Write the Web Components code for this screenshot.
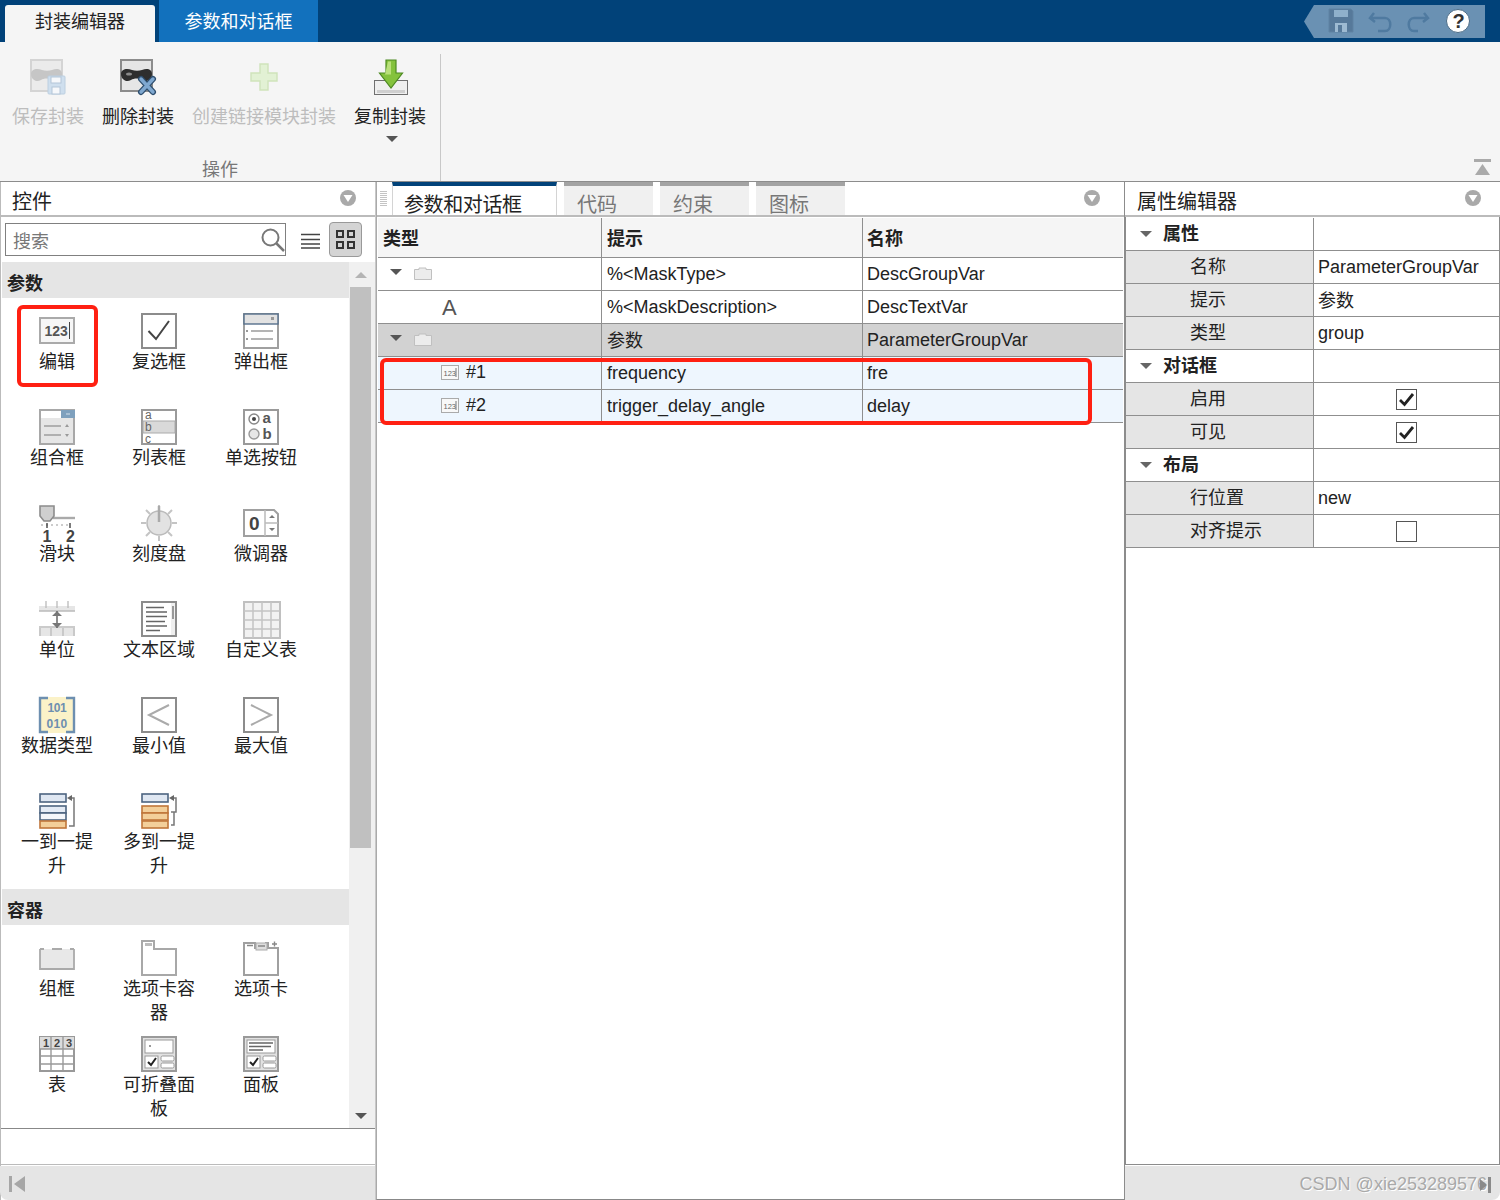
<!DOCTYPE html>
<html lang="zh">
<head>
<meta charset="utf-8">
<title>封装编辑器</title>
<style>
  html,body{margin:0;padding:0;background:#fff;}
  body{font-family:"Liberation Sans","Noto Sans CJK SC",sans-serif;color:#222;font-size:18px;}
</style>
</head>
<body>
<me-app>
  <me-ribbon slot="ribbon">
    <me-ribbon-button icon="saveMask" disabled>保存封装</me-ribbon-button>
    <me-ribbon-button icon="delMask">删除封装</me-ribbon-button>
    <me-ribbon-button icon="plus" disabled>创建链接模块封装</me-ribbon-button>
    <me-ribbon-button icon="copyMask" caret>复制封装</me-ribbon-button>
  </me-ribbon>

  <me-pane slot="left" status="left">
    <me-pane-title slot="head" label="控件"></me-pane-title>
    <me-palette-tools></me-palette-tools>
    <me-palette>
      <me-section label="参数">
        <me-item icon="edit">编辑</me-item>
        <me-item icon="check">复选框</me-item>
        <me-item icon="popup">弹出框</me-item>
        <me-item icon="combo">组合框</me-item>
        <me-item icon="list">列表框</me-item>
        <me-item icon="radio">单选按钮</me-item>
        <me-item icon="slider">滑块</me-item>
        <me-item icon="dial">刻度盘</me-item>
        <me-item icon="spinner">微调器</me-item>
        <me-item icon="unit">单位</me-item>
        <me-item icon="textarea">文本区域</me-item>
        <me-item icon="custom">自定义表</me-item>
        <me-item icon="datatype">数据类型</me-item>
        <me-item icon="min">最小值</me-item>
        <me-item icon="max">最大值</me-item>
        <me-item icon="one">一到一提升</me-item>
        <me-item icon="many">多到一提升</me-item>
      </me-section>
      <me-section label="容器">
        <me-item icon="group">组框</me-item>
        <me-item icon="tabbox">选项卡容器</me-item>
        <me-item icon="tab">选项卡</me-item>
        <me-item icon="table">表</me-item>
        <me-item icon="collapse">可折叠面板</me-item>
        <me-item icon="panel">面板</me-item>
      </me-section>
    </me-palette>
  </me-pane>

  <me-pane slot="mid">
    <me-tabs slot="head"></me-tabs>
    <me-param-row kind="head"><span slot="a">类型</span><span slot="b">提示</span><span slot="c">名称</span></me-param-row>
    <me-param-row><me-tree-cell slot="a" icon="folder" caret></me-tree-cell><span slot="b">%&lt;MaskType&gt;</span><span slot="c">DescGroupVar</span></me-param-row>
    <me-param-row><me-tree-cell slot="a" icon="letter"></me-tree-cell><span slot="b">%&lt;MaskDescription&gt;</span><span slot="c">DescTextVar</span></me-param-row>
    <me-param-row kind="sel"><me-tree-cell slot="a" icon="folder" caret></me-tree-cell><span slot="b" style="margin-bottom:2px">参数</span><span slot="c">ParameterGroupVar</span></me-param-row>
    <me-param-row kind="child"><me-tree-cell slot="a" icon="mini">#1</me-tree-cell><span slot="b">frequency</span><span slot="c">fre</span></me-param-row>
    <me-param-row kind="child"><me-tree-cell slot="a" icon="mini">#2</me-tree-cell><span slot="b">trigger_delay_angle</span><span slot="c">delay</span></me-param-row>
  </me-pane>

  <me-pane slot="right" status="right">
    <me-pane-title slot="head" label="属性编辑器" style="padding-left:12px"></me-pane-title>
    <me-prop-table>
      <me-prop-row kind="head">属性</me-prop-row>
      <me-prop-row label="名称">ParameterGroupVar</me-prop-row>
      <me-prop-row label="提示" cjk>参数</me-prop-row>
      <me-prop-row label="类型">group</me-prop-row>
      <me-prop-row kind="head">对话框</me-prop-row>
      <me-prop-row label="启用"><me-checkbox checked></me-checkbox></me-prop-row>
      <me-prop-row label="可见"><me-checkbox checked></me-checkbox></me-prop-row>
      <me-prop-row kind="head">布局</me-prop-row>
      <me-prop-row label="行位置">new</me-prop-row>
      <me-prop-row label="对齐提示"><me-checkbox></me-checkbox></me-prop-row>
    </me-prop-table>
  </me-pane>

  <me-highlight slot="over" style="left:17px;top:305px;width:81px;height:82px"></me-highlight>
  <me-highlight slot="over" style="left:380px;top:358px;width:712px;height:67px"></me-highlight>
</me-app>

<script>
const FONT = `"Liberation Sans","Noto Sans CJK SC",sans-serif`;

const MASK = "M1 13C1 8 7 7 12 9C15 10 19 10 22 9C27 7 32 8 32 13C32 18 27 22 22 19C19 17 14 17 11 19C6 22 1 18 1 13Z";

/* all icons are drawn on a 36x36 box */
const ICONS = {
  saveMask: `<rect x="1" y="1" width="31" height="31" fill="#ebebeb" stroke="#d4d4d4" stroke-width="2"/>
    <path d="${MASK}" transform="translate(0 2)" fill="#c6c6c6"/>
    <rect x="18" y="17" width="17" height="18" rx="1" fill="#cfdfee" stroke="#bccfe0"/>
    <rect x="21" y="18" width="10" height="6" fill="#f6f8fb" stroke="#b4c6d8"/>
    <rect x="22" y="28" width="8" height="7" fill="#f6f8fb" stroke="#b4c6d8"/>`,
  delMask: `<rect x="1" y="1" width="31" height="31" fill="#e6e6e6" stroke="#8c8c8c" stroke-width="2"/>
    <path d="${MASK}" transform="translate(0 2)" fill="#2e2e2e"/>
    <ellipse cx="9" cy="15" rx="3" ry="1.6" fill="#8a8a8a"/>
    <path d="M21 20L33 33M33 20L21 33" stroke="#2f4f6f" stroke-width="6" stroke-linecap="round"/>
    <path d="M21 20L33 33M33 20L21 33" stroke="#7fa8d0" stroke-width="3.4" stroke-linecap="round"/>`,
  plus: `<path d="M14 5h8v9h9v8h-9v9h-8v-9h-9v-8h9z" fill="#e2f1d4" stroke="#cfe3bb" stroke-width="1.4"/>`,
  copyMask: `<rect x="2.500" y="21.500" width="33" height="14" fill="#efefef" stroke="#707070"/>
    <rect x="5" y="31" width="28" height="3" fill="#cfcfcf"/>
    <path d="M14 1h10v13h6.500L19 29 7.500 14H14z" fill="#84c23c" stroke="#4d8a22" stroke-width="1.200"/>
    <path d="M16 2.500h3v13h-6z" fill="#b9e07a"/>`,
  edit: `<rect x="1" y="5" width="34" height="25" fill="#f6f6f6" stroke="#aaa" stroke-width="2"/>
    <text x="5.500" y="23" font-size="14" font-weight="700" fill="#555" font-family="Liberation Sans">123</text>
    <path d="M30.500 9v17" stroke="#444"/>`,
  check: `<rect x="1" y="1" width="34" height="34" fill="#fff" stroke="#8c8c8c" stroke-width="2"/>
    <path d="M7.500 18L15 26L28 8" fill="none" stroke="#444" stroke-width="2"/>`,
  popup: `<rect x="1" y="1" width="34" height="34" fill="#fff" stroke="#a0a0a0" stroke-width="2"/>
    <rect x="1" y="1" width="34" height="10" fill="#e2e2e2" stroke="#56708c" stroke-width="1.400"/>
    <rect x="28" y="4" width="3" height="3" fill="#999"/>
    <path d="M8 18H30M8 26H30" stroke="#b4b4b4" stroke-width="2"/>
    <path d="M3 18h2M3 26h2" stroke="#999" stroke-width="2"/>`,
  combo: `<rect x="1" y="1" width="34" height="34" fill="#e6e6e6" stroke="#a8a8a8" stroke-width="2"/>
    <rect x="2" y="2" width="21" height="7" fill="#fff"/>
    <rect x="22" y="1" width="14" height="8" fill="#7ea0bd"/>
    <rect x="27" y="4" width="4" height="2" fill="#a9c0d4"/>
    <path d="M5 17H22M5 26H22" stroke="#b0b0b0" stroke-width="2"/>
    <path d="M26 18l2-3 2 3zM26 25l2 3 2-3z" fill="#999"/>`,
  list: `<rect x="1" y="1" width="34" height="34" fill="#fff" stroke="#9a9a9a" stroke-width="2"/>
    <rect x="2" y="12" width="32" height="12" fill="#d9d9d9" stroke="#aaa"/>
    <g font-size="12" fill="#666" font-family="Liberation Sans"><text x="4" y="10">a</text><text x="4" y="22">b</text><text x="4" y="34">c</text></g>`,
  radio: `<rect x="1" y="1" width="34" height="34" fill="#fff" stroke="#9a9a9a" stroke-width="2"/>
    <circle cx="11" cy="10" r="5" fill="#fff" stroke="#888" stroke-width="1.400"/><circle cx="11" cy="10" r="2" fill="#444"/>
    <circle cx="11" cy="25" r="5" fill="#e6e6e6" stroke="#999" stroke-width="1.400"/>
    <g font-size="15" font-weight="700" fill="#555" font-family="Liberation Sans"><text x="19.500" y="14">a</text><text x="19.500" y="30">b</text></g>`,
  slider: `<path d="M14 13H36" stroke="#aaa" stroke-width="2.400"/>
    <path d="M1 1H15V11L11 16H5L1 11Z" fill="#cfcfcf" stroke="#8c8c8c" stroke-width="1.600"/>
    <path d="M3 19v2M8 19v2M13 19v2M18 19v2M23 19v2M28 19v2" stroke="#999"/>
    <path d="M8 18v5M31 18v5" stroke="#444" stroke-width="1.400"/>
    <g font-size="16" font-weight="700" fill="#444" font-family="Liberation Sans"><text x="3.500" y="37">1</text><text x="27" y="37">2</text></g>`,
  dial: `<g stroke="#c4c4c4" stroke-width="2"><path d="M18 0v5M18 31v5M0 18h5M31 18h5M5 5l4 4M27 27l4 4M5 31l4-4M27 9l4-4"/></g>
    <circle cx="18" cy="18" r="12" fill="#e2e2e2" stroke="#bbb" stroke-width="1.500"/>
    <path d="M18 1V17" stroke="#aaa" stroke-width="2.500"/>`,
  spinner: `<path d="M1 5H31L35 9V31H1Z" fill="#fff" stroke="#a0a0a0" stroke-width="2"/>
    <path d="M22 5V31M22 18H35" stroke="#bbb" stroke-width="1.500"/>
    <text x="6" y="25" font-size="19" font-weight="700" fill="#444" font-family="Liberation Sans">0</text>
    <path d="M26 13l3-3 3 3zM26 23l3 3 3-3z" fill="#777"/>`,
  unit: `<rect x="0" y="5" width="36" height="5" fill="#e6e6e6"/><rect x="0" y="27" width="36" height="8" fill="#e6e6e6"/>
    <path d="M7 0v7M18 0v7M29 0v7M1 27v8M12 27v8M24 27v8M35 27v8M0 26H36M0 10H36" stroke="#bbb" stroke-width="1.300"/>
    <path d="M18 10V27" stroke="#666" stroke-width="1.500"/>
    <path d="M13 15l5-5 5 5zM13 22l5 5 5-5z" fill="#777"/>`,
  textarea: `<rect x="1" y="1" width="34" height="34" fill="#fff" stroke="#8c8c8c" stroke-width="2"/>
    <rect x="30" y="2" width="4" height="32" fill="#efefef"/><rect x="31" y="5" width="2" height="13" fill="#999"/>
    <path d="M5 6.500H23M5 11H26M5 15.500H26M5 20.500H24M5 25H26M5 29.500H19" stroke="#666" stroke-width="1.600"/>`,
  custom: `<rect x="1" y="1" width="36" height="36" fill="#f2f2f2" stroke="#c0c0c0" stroke-width="2"/>
    <path d="M10 1V37M19 1V37M28 1V37M1 10H37M1 19H37M1 28H37" stroke="#c4c4c4" stroke-width="1.500"/>`,
  datatype: `<rect x="0" y="0" width="36" height="36" fill="#fbf2c8"/>
    <path d="M9 1H1V35H9M27 1H35V35H27" fill="none" stroke="#6d8fb0" stroke-width="2.400"/>
    <g font-size="12" font-weight="700" fill="#6d8fb0" font-family="Liberation Sans"><text x="8.500" y="14.500">1</text><text x="14.800" y="14.500">0</text><text x="21" y="14.500">1</text><text x="7.500" y="31">0</text><text x="14.500" y="31">1</text><text x="21.500" y="31">0</text></g>`,
  min: `<rect x="1" y="1" width="34" height="34" fill="#fff" stroke="#8c8c8c" stroke-width="2"/>
    <path d="M28 8L8 18L28 28" fill="none" stroke="#aaa" stroke-width="2"/>`,
  max: `<rect x="1" y="1" width="34" height="34" fill="#fff" stroke="#8c8c8c" stroke-width="2"/>
    <path d="M8 8L28 18L8 28" fill="none" stroke="#aaa" stroke-width="2"/>`,
  one: `<rect x="1" y="1" width="26" height="8" fill="#dfe7f2" stroke="#4d6480" stroke-width="1.600"/>
    <rect x="1" y="13" width="26" height="7" fill="#e4ebf5" stroke="#4d6480" stroke-width="1.600"/>
    <rect x="1" y="20" width="26" height="7" fill="#f4f6fa" stroke="#4d6480" stroke-width="1.600"/>
    <rect x="1" y="28" width="26" height="7" fill="#f3cf9a" stroke="#c0763a" stroke-width="1.600"/>
    <path d="M30 5H35V33H30" fill="none" stroke="#777" stroke-width="1.500"/><path d="M33 2l-5 3 5 3z" fill="#666"/>`,
  many: `<rect x="1" y="1" width="26" height="8" fill="#dfe7f2" stroke="#4d6480" stroke-width="1.600"/>
    <rect x="1" y="13" width="26" height="7" fill="#f3cf9a" stroke="#c0763a" stroke-width="1.600"/>
    <rect x="1" y="20" width="26" height="7" fill="#f3cf9a" stroke="#c0763a" stroke-width="1.600"/>
    <rect x="1" y="28" width="26" height="7" fill="#f3cf9a" stroke="#c0763a" stroke-width="1.600"/>
    <path d="M30 5H35V19H30M30 19H33V32H30" fill="none" stroke="#777" stroke-width="1.500"/><path d="M33 2l-5 3 5 3z" fill="#666"/>`,
  group: `<path d="M1 9V29H35V9M1 9H5M31 9h4M13 9H23" fill="#e8e8e8" stroke="#aaa" stroke-width="1.800"/>`,
  tabbox: `<path d="M1 35V1H13V9H35V35Z" fill="#fff" stroke="#a8a8a8" stroke-width="2"/><rect x="4" y="3" width="7" height="3" fill="#bbb"/>`,
  tab: `<path d="M1 35V3H12V8H23V3H25V8H35V35Z" fill="#fff" stroke="#a0a0a0" stroke-width="2"/>
    <rect x="13" y="3" width="11" height="7" fill="#dedede" stroke="#aaa"/><path d="M4 5.500H10M15 6H22" stroke="#888" stroke-width="1.400"/>
    <path d="M29 4h5M31.500 1.500v5" stroke="#888" stroke-width="1.400"/>`,
  table: `<rect x="1" y="1" width="34" height="34" fill="#fff" stroke="#999" stroke-width="2"/>
    <rect x="1" y="1" width="34" height="12" fill="#dcdcdc"/>
    <path d="M12 1V35M24 1V35M1 13H35M1 20H35M1 28H35" stroke="#999" stroke-width="1.400"/>
    <g font-size="11" font-weight="700" fill="#444" font-family="Liberation Sans"><text x="4" y="11">1</text><text x="15" y="11">2</text><text x="27" y="11">3</text></g>`,
  collapse: `<rect x="1" y="1" width="34" height="34" fill="#e2e2e2" stroke="#9a9a9a" stroke-width="2"/>
    <rect x="4" y="4" width="28" height="13" fill="#fff" stroke="#999"/><rect x="8" y="9" width="2" height="2" fill="#999"/>
    <rect x="4" y="20" width="13" height="12" fill="#fff" stroke="#999"/><path d="M7 26l3 3 5-7" fill="none" stroke="#222" stroke-width="2"/>
    <rect x="20" y="20" width="13" height="5" rx="1.500" fill="#fff" stroke="#999"/><rect x="20" y="27" width="13" height="5" rx="1.500" fill="#fff" stroke="#999"/>`,
  panel: `<rect x="1" y="1" width="34" height="34" fill="#e2e2e2" stroke="#9a9a9a" stroke-width="2"/>
    <rect x="4" y="4" width="28" height="13" fill="#fff" stroke="#999"/><path d="M6 7H30M6 10.500H28M6 14H20" stroke="#666" stroke-width="1.300"/>
    <rect x="4" y="20" width="13" height="12" fill="#fff" stroke="#999"/><path d="M7 26l3 3 5-7" fill="none" stroke="#222" stroke-width="2"/>
    <rect x="20" y="20" width="13" height="5" rx="1.500" fill="#fff" stroke="#999"/><rect x="20" y="27" width="13" height="5" rx="1.500" fill="#fff" stroke="#999"/>`
};

function icon(name, size){
  const s = size || 36;
  return `<svg width="${s}" height="${s}" viewBox="0 0 36 36" style="display:block;overflow:visible">${ICONS[name] || ""}</svg>`;
}

class MeBase extends HTMLElement{
  constructor(){
    super();
    this.attachShadow({mode: "open"});
  }
  getStyle(){ return ""; }
  getTemplate(){ return "<slot></slot>"; }
  connectedCallback(){
    this.shadowRoot.innerHTML = `<style>${this.getStyle()}</style>${this.getTemplate()}`;
  }
}

class MeApp extends MeBase{
  getStyle(){
    return `
      :host{display:block;position:relative;width:1500px;height:1200px;overflow:hidden;background:#fff;font-family:${FONT};}
      .top{height:42px;background:#014279;display:flex;align-items:flex-start;font-size:18px;}
      .tab{display:flex;align-items:center;justify-content:center;box-sizing:border-box;}
      .on{margin:5px 0 0 5px;width:150px;height:37px;background:#f5f5f5;color:#222;border-radius:3px 3px 0 0;padding-bottom:8px;}
      .off{margin-left:4px;width:159px;height:42px;background:#1271bd;color:#fff;padding-bottom:3px;}
      .quick{margin:5px 15px 0 auto;width:181px;height:33px;background:#6a91b3;clip-path:polygon(10px 0,100% 0,100% 100%,10px 100%,0 50%);}
      .quick svg{display:block;}
      .main{display:grid;grid-template-columns:376px 748px 376px;height:1018px;}
    `;
  }
  getTemplate(){
    return `
      <div class="top">
        <div class="tab on">封装编辑器</div>
        <div class="tab off">参数和对话框</div>
        <div class="quick">
          <svg width="181" height="33" viewBox="0 0 181 33">
            <path d="M25 4H47L49 6V27H25Z" fill="#56799a" stroke="#5f83a3"/>
            <rect x="30" y="5" width="14" height="7" fill="#8fb0cb"/>
            <rect x="31" y="18" width="12" height="9" fill="#9dbad2"/><rect x="34" y="20" width="4" height="7" fill="#56799a"/>
            <path d="M70 8L66 13L71 17M67 13H81C88 13 88 26 81 26H74" fill="none" stroke="#4f7aa0" stroke-width="2.500"/>
            <path d="M120 8L124 13L119 17M123 13H110C103 13 103 26 110 26H114" fill="none" stroke="#4f7aa0" stroke-width="2.500"/>
            <circle cx="154" cy="16" r="11.500" fill="#fff" stroke="#4a6a85"/>
            <text x="148.500" y="23" font-size="20" font-weight="700" fill="#333" font-family="Liberation Sans">?</text>
          </svg>
        </div>
      </div>
      <slot name="ribbon"></slot>
      <div class="main">
        <slot name="left"></slot>
        <slot name="mid"></slot>
        <slot name="right"></slot>
      </div>
      <slot name="over"></slot>
    `;
  }
}

class MeRibbon extends MeBase{
  getStyle(){
    return `
      :host{display:block;box-sizing:border-box;height:140px;background:#f5f5f5;border-bottom:1px solid #8c8c8c;position:relative;}
      .section{box-sizing:border-box;width:441px;height:139px;position:relative;}
      .buttons{display:flex;padding-left:3px;padding-top:17px;box-sizing:border-box;height:116px;}
      .name{text-align:center;font-size:18px;line-height:24px;color:#777;width:440px;}
      .sep{position:absolute;left:440px;top:12px;bottom:0;width:1px;background:#c8c8c8;}
      .min{position:absolute;right:9px;top:117px;}
    `;
  }
  getTemplate(){
    return `
      <div class="section">
        <div class="buttons"><slot></slot></div>
        <div class="name">操作</div>
        <div class="sep"></div>
      </div>
      <svg class="min" width="17" height="16" viewBox="0 0 17 16"><rect x="0" y="0" width="17" height="3" fill="#aaa"/><path d="M8.500 5L16 16H1z" fill="#aaa"/></svg>
    `;
  }
}

class MeRibbonButton extends MeBase{
  getStyle(){
    return `
      :host{display:flex;flex-direction:column;align-items:center;padding:0 9px;font-size:18px;line-height:24px;color:${this.hasAttribute("disabled") ? "#bdbdbd" : "#222"};}
      .label{margin-top:10px;white-space:nowrap;}
      .caret{margin:7px 0 0 4px;width:0;height:0;border-left:6px solid transparent;border-right:6px solid transparent;border-top:6px solid #555;}
    `;
  }
  getTemplate(){
    return `${icon(this.getAttribute("icon"))}<div class="label"><slot></slot></div>${this.hasAttribute("caret") ? '<div class="caret"></div>' : ""}`;
  }
}

class MePane extends MeBase{
  getStyle(){
    const side = this.getAttribute("status");
    return `
      :host{display:flex;flex-direction:column;height:1018px;box-sizing:border-box;position:relative;background:#fff;
        ${side === "left" ? "border-left:1px solid #bbb;border-right:1px solid #c8c8c8;" : ""}
        ${side === "right" ? "border-left:1px solid #8c8c8c;" : ""}
        ${side ? "" : "border-left:1px solid #aaa;border-bottom:1px solid #888;"}}
      .body{flex:1;min-height:0;display:flex;flex-direction:column;${side === "right" ? "border-left:1px solid #8c8c8c;border-right:1px solid #8c8c8c;" : ""}}
      .status{height:34px;margin-top:1px;background:#e5e5e5;display:flex;align-items:center;flex:none;position:relative;}
      .status.left{border-radius:0 0 0 8px;margin-left:-1px;}
      .status.right{justify-content:flex-end;padding-right:13px;border-radius:0 0 8px 0;}
      .mark{font-size:18px;color:#a9a9a9;text-shadow:1px 1px 0 #fff;white-space:nowrap;padding-top:2px;}
      .sp{height:35px;flex:none;border-bottom:1px solid #bbb;box-sizing:content-box;${side === "right" ? "border-left:1px solid #8c8c8c;border-right:1px solid #8c8c8c;border-bottom-color:#8c8c8c;" : ""}}
      .right-end{position:absolute;right:8px;top:11px;}
      .left-end{margin:2px 0 0 9px;}
    `;
  }
  getTemplate(){
    const side = this.getAttribute("status");
    let bottom = "";
    if(side === "left"){
      bottom = `<div class="sp"></div><div class="status left">
        <svg class="left-end" width="17" height="16" viewBox="0 0 17 16"><rect x="0" y="0" width="3" height="16" fill="#a6a6a6"/><path d="M16 0V16L5 8z" fill="#a6a6a6"/></svg></div>`;
    }
    if(side === "right"){
      bottom = `<div class="sp"></div><div class="status right"><span class="mark">CSDN @xie253289576</span>
        <svg class="right-end" width="12" height="16" viewBox="0 0 12 16"><rect x="8" y="0" width="3" height="16" fill="#8a8a8a"/><path d="M0 2V14L7 8z" fill="#8a8a8a"/></svg></div>`;
    }
    return `<slot name="head"></slot><div class="body"><slot></slot></div>${bottom}`;
  }
}

class MePaneTitle extends MeBase{
  getStyle(){
    return `
      :host{display:flex;align-items:center;justify-content:space-between;box-sizing:content-box;height:33px;border-bottom:2px solid #bbb;padding:0 19px 0 11px;font-size:20px;color:#222;flex:none;}
      span{line-height:33px;padding-top:7px;}
      svg{margin-top:-1px;}
    `;
  }
  getTemplate(){
    return `<span>${this.getAttribute("label")}</span>
      <svg width="16" height="16" viewBox="0 0 16 16"><circle cx="8" cy="8" r="8" fill="#a9a9a9"/><path d="M3.500 5H12.500L8 12z" fill="#fff"/></svg>`;
  }
}

class MePaletteTools extends MeBase{
  getStyle(){
    return `
      :host{display:flex;box-sizing:border-box;height:45px;padding:6px 0 0 4px;flex:none;}
      .search{box-sizing:border-box;width:281px;height:33px;border:1px solid #808080;display:flex;align-items:center;justify-content:space-between;padding:0 0 0 7px;color:#777;font-size:18px;}
      .lines{margin:10px 0 0 15px;}
      .grid{box-sizing:border-box;margin-left:9px;width:33px;height:35px;margin-top:-1px;background:#d4d4d4;border:1px solid #999;border-radius:4px;display:flex;align-items:center;justify-content:center;}
    `;
  }
  getTemplate(){
    return `
      <div class="search"><span>搜索</span>
        <svg width="24" height="24" viewBox="0 0 24 24"><circle cx="9.500" cy="9.500" r="8" fill="none" stroke="#777" stroke-width="2"/><path d="M15.500 15.500L23 23" stroke="#777" stroke-width="2.500"/></svg>
      </div>
      <svg class="lines" width="19" height="16" viewBox="0 0 19 16"><path d="M0 1.500H19M0 6.500H19M0 11H19M0 15H19" stroke="#444" stroke-width="1.600"/></svg>
      <div class="grid"><svg width="19" height="19" viewBox="0 0 19 19"><g fill="none" stroke="#333" stroke-width="2"><rect x="1" y="1" width="6" height="6"/><rect x="12" y="1" width="6" height="6"/><rect x="1" y="12" width="6" height="6"/><rect x="12" y="12" width="6" height="6"/></g></svg></div>
    `;
  }
}

class MePalette extends MeBase{
  getStyle(){
    return `
      :host{display:flex;height:866px;flex:none;border-bottom:1px solid #888;overflow:hidden;}
      .content{box-sizing:border-box;margin-left:1px;width:347px;height:866px;overflow:hidden;}
      .bar{width:26px;background:#f0f0f0;display:flex;flex-direction:column;align-items:center;}
      .ends{height:25px;display:flex;align-items:center;justify-content:center;flex:none;}
      .thumb{width:21px;height:561px;background:#c0c0c0;margin-right:3px;flex:none;}
      .fill{flex:1;}
      .up{border-left:6px solid transparent;border-right:6px solid transparent;border-bottom:6px solid #b4b4b4;margin-right:3px;}
      .down{border-left:6px solid transparent;border-right:6px solid transparent;border-top:6px solid #555;margin-right:3px;}
    `;
  }
  getTemplate(){
    return `
      <div class="content"><slot></slot></div>
      <div class="bar">
        <div class="ends"><div class="up"></div></div>
        <div class="thumb"></div>
        <div class="fill"></div>
        <div class="ends"><div class="down"></div></div>
      </div>
    `;
  }
}

class MeSection extends MeBase{
  getStyle(){
    return `
      :host{display:block;}
      h3{margin:0;height:36px;line-height:44px;background:#e5e5e5;font-size:18px;font-weight:700;padding-left:5px;color:#222;box-sizing:border-box;overflow:hidden;}
      .grid{display:grid;grid-template-columns:repeat(3,102px);grid-auto-rows:96px;padding:15px 0 0 4px;}
    `;
  }
  getTemplate(){
    return `<h3>${this.getAttribute("label")}</h3><div class="grid"><slot></slot></div>`;
  }
}

class MeItem extends MeBase{
  getStyle(){
    return `
      :host{display:flex;flex-direction:column;align-items:center;font-size:18px;line-height:24px;color:#222;}
      .label{width:76px;text-align:center;word-break:break-all;margin-top:1px;}
    `;
  }
  getTemplate(){
    return `${icon(this.getAttribute("icon"))}<div class="label"><slot></slot></div>`;
  }
}

class MeTabs extends MeBase{
  getStyle(){
    return `
      :host{display:flex;height:33px;border-bottom:2px solid #bbb;flex:none;position:relative;font-size:20px;}
      .grip{width:7px;height:15px;margin:9px 0 0 3px;background:repeating-linear-gradient(#c4c4c4 0 1px,#fff 1px 2px);}
      .t{box-sizing:border-box;height:33px;border-top:4px solid #a3a3a3;background:#f0f0f0;color:#777;width:89px;padding-left:13px;line-height:39px;margin-left:7px;overflow:hidden;}
      .t.on{border-top-color:#014279;background:#fff;color:#222;width:165px;padding-left:11px;margin-left:5px;border-left:1px solid #d4d4d4;border-right:1px solid #d4d4d4;letter-spacing:-.4px;}
    `;
  }
  getTemplate(){
    return `<div class="grip"></div>
      <div class="t on">参数和对话框</div>
      <div class="t">代码</div><div class="t">约束</div><div class="t">图标</div>
      <svg style="margin:8px 0 0 auto;position:absolute;right:24px" width="16" height="16" viewBox="0 0 16 16"><circle cx="8" cy="8" r="8" fill="#a9a9a9"/><path d="M3.500 5H12.500L8 12z" fill="#fff"/></svg>`;
  }
}

class MeParamRow extends MeBase{
  getStyle(){
    const kind = this.getAttribute("kind");
    const bg = {head: "#f5f5f5", sel: "#d2d2d2", child: "#eef6fe"}[kind] || "#fff";
    return `
      :host{display:grid;grid-template-columns:224px 261px 1fr;box-sizing:border-box;height:${kind === "head" ? 40 : 33}px;margin:${kind === "head" ? "1px" : "0"} 1px 0 1px;background:${bg};border-bottom:1px solid #8f8f8f;font-size:18px;color:#222;flex:none;}
      div{display:flex;align-items:center;box-sizing:border-box;padding-left:5px;overflow:hidden;white-space:nowrap;${kind === "head" ? "font-weight:700;padding-bottom:2px;" : ""}}
      .a,.b{border-right:1px solid #8f8f8f;}
      .c{padding-left:4px;}
    `;
  }
  getTemplate(){
    return `<div class="a"><slot name="a"></slot></div><div class="b"><slot name="b"></slot></div><div class="c"><slot name="c"></slot></div>`;
  }
}

class MeTreeCell extends MeBase{
  getStyle(){
    return `
      :host{display:block;position:relative;width:218px;height:32px;}
      .caret{position:absolute;left:7px;top:11px;border-left:6px solid transparent;border-right:6px solid transparent;border-top:6px solid #555;}
      .folder{position:absolute;left:31px;top:9px;}
      .letter{position:absolute;left:59px;top:3px;font-size:22px;color:#555;line-height:28px;}
      .mini{position:absolute;left:58px;top:8px;}
      .txt{position:absolute;left:83px;top:3px;line-height:24px;}
    `;
  }
  getTemplate(){
    const kind = this.getAttribute("icon");
    if(kind === "folder"){
      return `<div class="caret"></div><svg class="folder" width="18" height="13" viewBox="0 0 18 13"><path d="M.5 2.500H5V1H12V2.500H17.500V12.500H.5Z" fill="#ececec" stroke="#c0c0c0"/></svg>`;
    }
    if(kind === "letter"){
      return `<div class="letter">A</div>`;
    }
    return `<svg class="mini" width="18" height="15" viewBox="0 0 18 15"><rect x=".5" y=".5" width="17" height="14" fill="#f8f8f8" stroke="#aaa"/><text x="2.500" y="10.500" font-size="7.500" fill="#666" font-family="Liberation Sans">123</text><path d="M15 3v9" stroke="#777"/></svg><div class="txt"><slot></slot></div>`;
  }
}

class MePropTable extends MeBase{
  getStyle(){
    return `:host{display:block;padding-top:1px;flex:none;}`;
  }
}

class MePropRow extends MeBase{
  getStyle(){
    const head = this.getAttribute("kind") === "head";
    return `
      :host{display:grid;grid-template-columns:188px 1fr;box-sizing:border-box;height:33px;border-bottom:1px solid #8f8f8f;font-size:18px;color:#222;}
      .k{display:flex;align-items:center;box-sizing:border-box;border-right:1px solid #8f8f8f;padding:0 0 4px ${head ? 37 : 64}px;${head ? "font-weight:700;" : "background:#e5e5e5;"}position:relative;}
      .v{display:flex;align-items:center;padding:0 0 ${this.hasAttribute("cjk") ? 2 : 0}px 4px;white-space:nowrap;}
      .caret{position:absolute;left:14px;top:13px;border-left:6px solid transparent;border-right:6px solid transparent;border-top:6px solid #666;}
    `;
  }
  getTemplate(){
    if(this.getAttribute("kind") === "head"){
      return `<div class="k"><i class="caret"></i><slot></slot></div><div class="v"></div>`;
    }
    return `<div class="k">${this.getAttribute("label")}</div><div class="v"><slot></slot></div>`;
  }
}

class MeCheckbox extends MeBase{
  getStyle(){
    return `
      :host{display:block;box-sizing:border-box;width:21px;height:21px;border:1px solid #555;background:#fff;margin:1px 0 0 78px;}
      svg{display:block;}
    `;
  }
  getTemplate(){
    return this.hasAttribute("checked") ? `<svg width="19" height="19" viewBox="0 0 19 19"><path d="M3 10L7.500 14.500L16 4" fill="none" stroke="#222" stroke-width="2.800"/></svg>` : "";
  }
}

class MeHighlight extends MeBase{
  getStyle(){
    return `:host{display:block;position:absolute;box-sizing:border-box;border:4px solid #ff2012;border-radius:6px;pointer-events:none;}`;
  }
  getTemplate(){ return ""; }
}

customElements.define("me-app", MeApp);
customElements.define("me-ribbon", MeRibbon);
customElements.define("me-ribbon-button", MeRibbonButton);
customElements.define("me-pane", MePane);
customElements.define("me-pane-title", MePaneTitle);
customElements.define("me-palette-tools", MePaletteTools);
customElements.define("me-palette", MePalette);
customElements.define("me-section", MeSection);
customElements.define("me-item", MeItem);
customElements.define("me-tabs", MeTabs);
customElements.define("me-param-row", MeParamRow);
customElements.define("me-tree-cell", MeTreeCell);
customElements.define("me-prop-table", MePropTable);
customElements.define("me-prop-row", MePropRow);
customElements.define("me-checkbox", MeCheckbox);
customElements.define("me-highlight", MeHighlight);
</script>
</body>
</html>
